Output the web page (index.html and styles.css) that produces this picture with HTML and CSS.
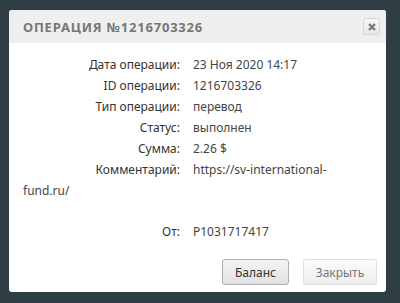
FILE: index.html
```html
<!DOCTYPE html>
<html lang="ru">
<head>
    <meta charset="UTF-8">
    <title>Операция</title>
    <link rel="stylesheet" href="styles.css">
</head>
<body>
    <div class="dialog">
        <div class="dialog-header">
            <span class="dialog-title">Операция №1216703326</span>
            <button class="close-btn" title="Закрыть">
                <svg width="8" height="8" viewBox="0 0 8 8"><path d="M1 1L7 7M7 1L1 7" stroke="#777" stroke-width="2.2"/></svg>
            </button>
        </div>
        <div class="dialog-body">
            <div class="row"><span class="label">Дата операции:</span>23 Ноя 2020 14:17</div>
            <div class="row"><span class="label">ID операции:</span>1216703326</div>
            <div class="row"><span class="label">Тип операции:</span>перевод</div>
            <div class="row"><span class="label">Статус:</span>выполнен</div>
            <div class="row"><span class="label">Сумма:</span>2.26 $</div>
            <div class="row"><span class="label">Комментарий:</span><span class="value">https://sv-international-fund.ru/</span></div>
            <div class="row from"><span class="label">От:</span>P1031717417</div>
        </div>
        <div class="dialog-footer">
            <button class="btn btn-main">Баланс</button>
            <button class="btn btn-close">Закрыть</button>
        </div>
    </div>
</body>
</html>
```

FILE: styles.css
```css
body {
    margin: 0;
    padding: 10px 0 0 9px;
    background-color: #2f3d44;
    font-family: "Noto Sans", sans-serif;
    height: 303px;
    box-sizing: border-box;
    overflow: hidden;
}
.dialog {
    width: 377px;
    height: 282px;
    background: #ffffff;
    border-radius: 3px;
    display: flex;
    flex-direction: column;
}
.dialog-header {
    height: 33px;
    background: #efefef;
    border-radius: 3px 3px 0 0;
    display: flex;
    align-items: center;
    justify-content: space-between;
    padding: 0 6px 0 14px;
}
.dialog-title {
    font-weight: bold;
    font-size: 13px;
    letter-spacing: 0.8px;
    text-transform: uppercase;
    color: #777777;
}
.close-btn {
    width: 17px;
    height: 17px;
    padding: 0;
    border: 1px solid #d6d6d6;
    border-radius: 3px;
    background: linear-gradient(#f7f7f7, #e6e6e6);
    display: flex;
    align-items: center;
    justify-content: center;
}
.dialog-body {
    padding: 11px 14px 0 14px;
    font-size: 12px;
    color: #444444;
    flex: 1;
}
.row {
    line-height: 21px;
}
.label {
    display: inline-block;
    width: 157px;
    text-align: right;
    margin-right: 13px;
    color: #333333;
}
.row.from {
    margin-top: 20px;
}
.dialog-footer {
    display: flex;
    justify-content: flex-end;
    gap: 14px;
    padding: 0 9px 7px 0;
}
.btn {
    height: 26px;
    border-radius: 3px;
    font-family: "Noto Sans", sans-serif;
    font-size: 12px;
    padding: 0 11px;
}
.btn-main {
    width: 67px;
    border: 1px solid #b0b0b0;
    background: linear-gradient(#f4f4f4, #e0e0e0);
    color: #333333;
}
.btn-close {
    width: 74px;
    border: 1px solid #dedede;
    background: linear-gradient(#fbfbfb, #eeeeee);
    color: #777777;
}
```
